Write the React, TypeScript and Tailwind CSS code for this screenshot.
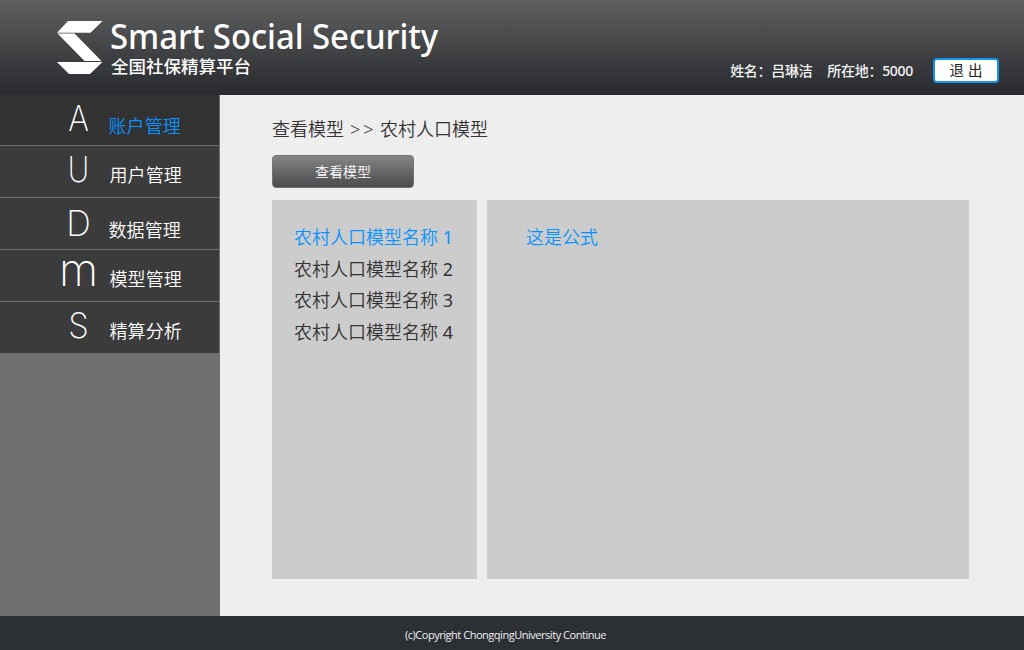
const navItems = [
  { letter: 'A', label: '账户管理', active: true, height: 'h-[51px]', letterStyle: 'text-[35px] leading-[46px] scale-x-[0.9]', letterPos: 'pt-0', labelPos: 'pt-[17px] pl-[108.5px]' },
  { letter: 'U', label: '用户管理', active: false, height: 'h-[52px]', letterStyle: 'text-[35px] leading-[46px] scale-x-[0.84]', letterPos: 'pt-0', labelPos: 'pt-[15px] pl-[109.5px]' },
  { letter: 'D', label: '数据管理', active: false, height: 'h-[52px]', letterStyle: 'text-[35px] leading-[46px] scale-x-[0.98]', letterPos: 'pt-[2px]', labelPos: 'pt-[18px] pl-[108.5px]' },
  { letter: 'm', label: '模型管理', active: false, height: 'h-[52px]', letterStyle: 'text-[45px] leading-[40px]', letterPos: 'pt-0', labelPos: 'pt-[15px] pl-[109.5px]' },
  { letter: 'S', label: '精算分析', active: false, height: 'h-[52px]', letterStyle: 'text-[35px] leading-[46px] scale-x-[0.94]', letterPos: 'pt-0', labelPos: 'pt-[15px] pl-[109.5px]' },
];

const models = [1, 2, 3, 4];

function Logo() {
  return (
    <svg className="h-[54px] w-[47px]" viewBox="0 0 47 54" fill="white">
      <polygon points="11,1 45.5,1 33.5,12.8 0,12.8" />
      <polygon points="0.5,13.6 17.5,13.6 44.5,41 27.5,41" />
      <polygon points="0,42 45.5,42 33,54 12,54" />
    </svg>
  );
}

function Header() {
  return (
    <header className="flex h-[95px] w-full items-start bg-linear-to-b from-[#606060] to-[#282a2e] pl-[57px] text-white">
      <div className="pt-5">
        <Logo />
      </div>
      <div className="flex flex-col pl-[6px] pt-[15px]">
        <h1 className="h-[40px] w-[360px] origin-left scale-x-[0.94] whitespace-nowrap font-['Noto_Sans'] text-[35px] leading-[41px] font-medium tracking-[-0.05px]">Smart Social Security</h1>
        <p className="whitespace-nowrap pl-px text-[17.5px] leading-[22px] font-medium">全国社保精算平台</p>
      </div>
      <div className="ml-auto flex items-center pr-[25px] pt-[58px] text-[14px] leading-[25px] font-medium whitespace-nowrap text-[#f3f3f3]">
        <span className="tracking-[-0.3px]">姓名：吕琳洁</span>
        <span className="ml-[15px] tracking-[-0.3px]">所在地：5000</span>
        <button className="ml-5 h-[25px] w-[66px] rounded-[4px] border-2 border-[#1295f3] bg-white pb-px text-[14.5px] leading-[20px] font-normal text-[#222]">退 出</button>
      </div>
    </header>
  );
}

function Sidebar() {
  return (
    <nav className="w-[220px] shrink-0 bg-[#6f6f6f]">
      {navItems.map((item) => (
        <a
          key={item.label}
          className={`grid w-[219px] border-b border-[#707070] ${item.height} ${item.active ? 'bg-[#323232] text-[#0793ff]' : 'bg-[#3b3b3b] text-white'}`}
        >
          <span className={`col-start-1 row-start-1 flex h-[48px] w-[98px] justify-end text-white ${item.letterPos}`}>
            <span className={`flex w-[39px] justify-center font-['Inter'] font-extralight ${item.letterStyle}`}>{item.letter}</span>
          </span>
          <span className={`col-start-1 row-start-1 text-[18px] leading-[28px] font-[350] tracking-[0.1px] ${item.labelPos}`}>{item.label}</span>
        </a>
      ))}
    </nav>
  );
}

export default function App() {
  return (
    <div className="flex h-[650px] w-[1024px] flex-col overflow-hidden bg-[#eee] font-['Noto_Sans','Noto_Sans_CJK_SC',sans-serif]">
      <Header />
      <div className="flex h-[521px]">
        <Sidebar />
        <main className="flex flex-1 flex-col pl-[52px]">
          <div className="flex h-[60px] pt-[20px] text-[18px] leading-[28px] font-[350] text-[#333]">
            <span>查看模型</span>
            <span className="w-[36px] pl-[6px] tracking-[3px]">&gt;&gt;</span>
            <span>农村人口模型</span>
          </div>
          <button className="h-[33px] w-[142px] rounded-[4px] border border-[#737373] bg-linear-to-b from-[#858585] to-[#4a4b4e] text-[14px] leading-[31px] font-[350] text-white">查看模型</button>
          <div className="mt-3 flex gap-[10px]">
            <ul className="h-[379px] w-[205px] bg-[#ccc] pt-[22px] pl-[22px] text-[18px] leading-[31.5px] font-[350] text-[#333]">
              {models.map((n) => (
                <li key={n} className={`whitespace-nowrap ${n === 1 ? 'text-[#0793ff]' : ''}`}>
                  农村人口模型名称 <span className="font-normal">{n}</span>
                </li>
              ))}
            </ul>
            <section className="h-[379px] w-[482px] bg-[#ccc] pt-[22px] pl-[39px] text-[18px] leading-[31.5px] font-[350] text-[#0793ff]">这是公式</section>
          </div>
        </main>
      </div>
      <footer className="h-[34px] bg-[#2c2f34] pt-[10px] pl-[405px] font-['Open_Sans'] text-[11px] leading-[18px] tracking-[-0.47px] text-[#f0f0f0]">(c)Copyright ChongqingUniversity Continue</footer>
    </div>
  );
}
